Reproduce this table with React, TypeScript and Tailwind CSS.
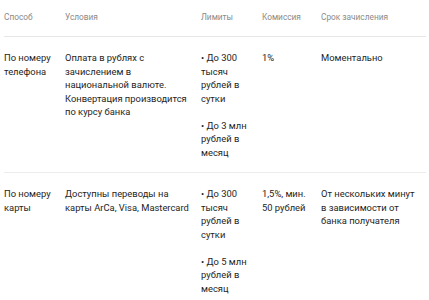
import React from "react";

const rows = [
  {
    method: ["По номеру", "телефона"],
    cond: ["Оплата в рублях с", "зачислением в", "национальной валюте.", "Конвертация производится", "по курсу банка"],
    limits: [["• До 300", "тысяч", "рублей в", "сутки"], ["• До 3 млн", "рублей в", "месяц"]],
    fee: ["1%"],
    time: ["Моментально"],
  },
  {
    method: ["По номеру", "карты"],
    cond: ["Доступны переводы на", "карты ArCa, Visa, Mastercard"],
    limits: [["• До 300", "тысяч", "рублей в", "сутки"], ["• До 5 млн", "рублей в", "месяц"]],
    fee: ["1,5%, мин.", "50 рублей"],
    time: ["От нескольких минут", "в зависимости от", "банка получателя"],
  },
];

const grid = "grid grid-cols-[61px_136px_61px_59px_1fr]";

function Lines({ lines }: { lines: string[] }) {
  return (
    <div className="flex flex-col">
      {lines.map((l, k) => (
        <span key={k} className="whitespace-nowrap">
          {l}
        </span>
      ))}
    </div>
  );
}

export default function App() {
  return (
    <div
      className="w-[429px] h-[300px] overflow-hidden bg-white pl-[4px] pr-[3px]"
      style={{ fontFamily: "Roboto, 'Liberation Sans', sans-serif" }}
    >
      <div className={`${grid} h-[37px] items-center text-[8.3px] text-[#8a8a8a] border-b border-[#e6e6e6] pb-[1px]`}>
        <div>Способ</div>
        <div>Условия</div>
        <div>Лимиты</div>
        <div>Комиссия</div>
        <div>Срок зачисления</div>
      </div>
      {rows.map((r, i) => (
        <div
          key={i}
          className={`${grid} pt-[14px] pb-[13px] text-[9.4px] leading-[13.5px] text-[#1e1e1e] ${i === 0 ? "border-b border-[#ececec]" : ""}`}
        >
          <Lines lines={r.method} />
          <Lines lines={r.cond} />
          <div className="flex flex-col gap-[13.5px]">
            {r.limits.map((l, j) => (
              <Lines key={j} lines={l} />
            ))}
          </div>
          <Lines lines={r.fee} />
          <Lines lines={r.time} />
        </div>
      ))}
    </div>
  );
}
